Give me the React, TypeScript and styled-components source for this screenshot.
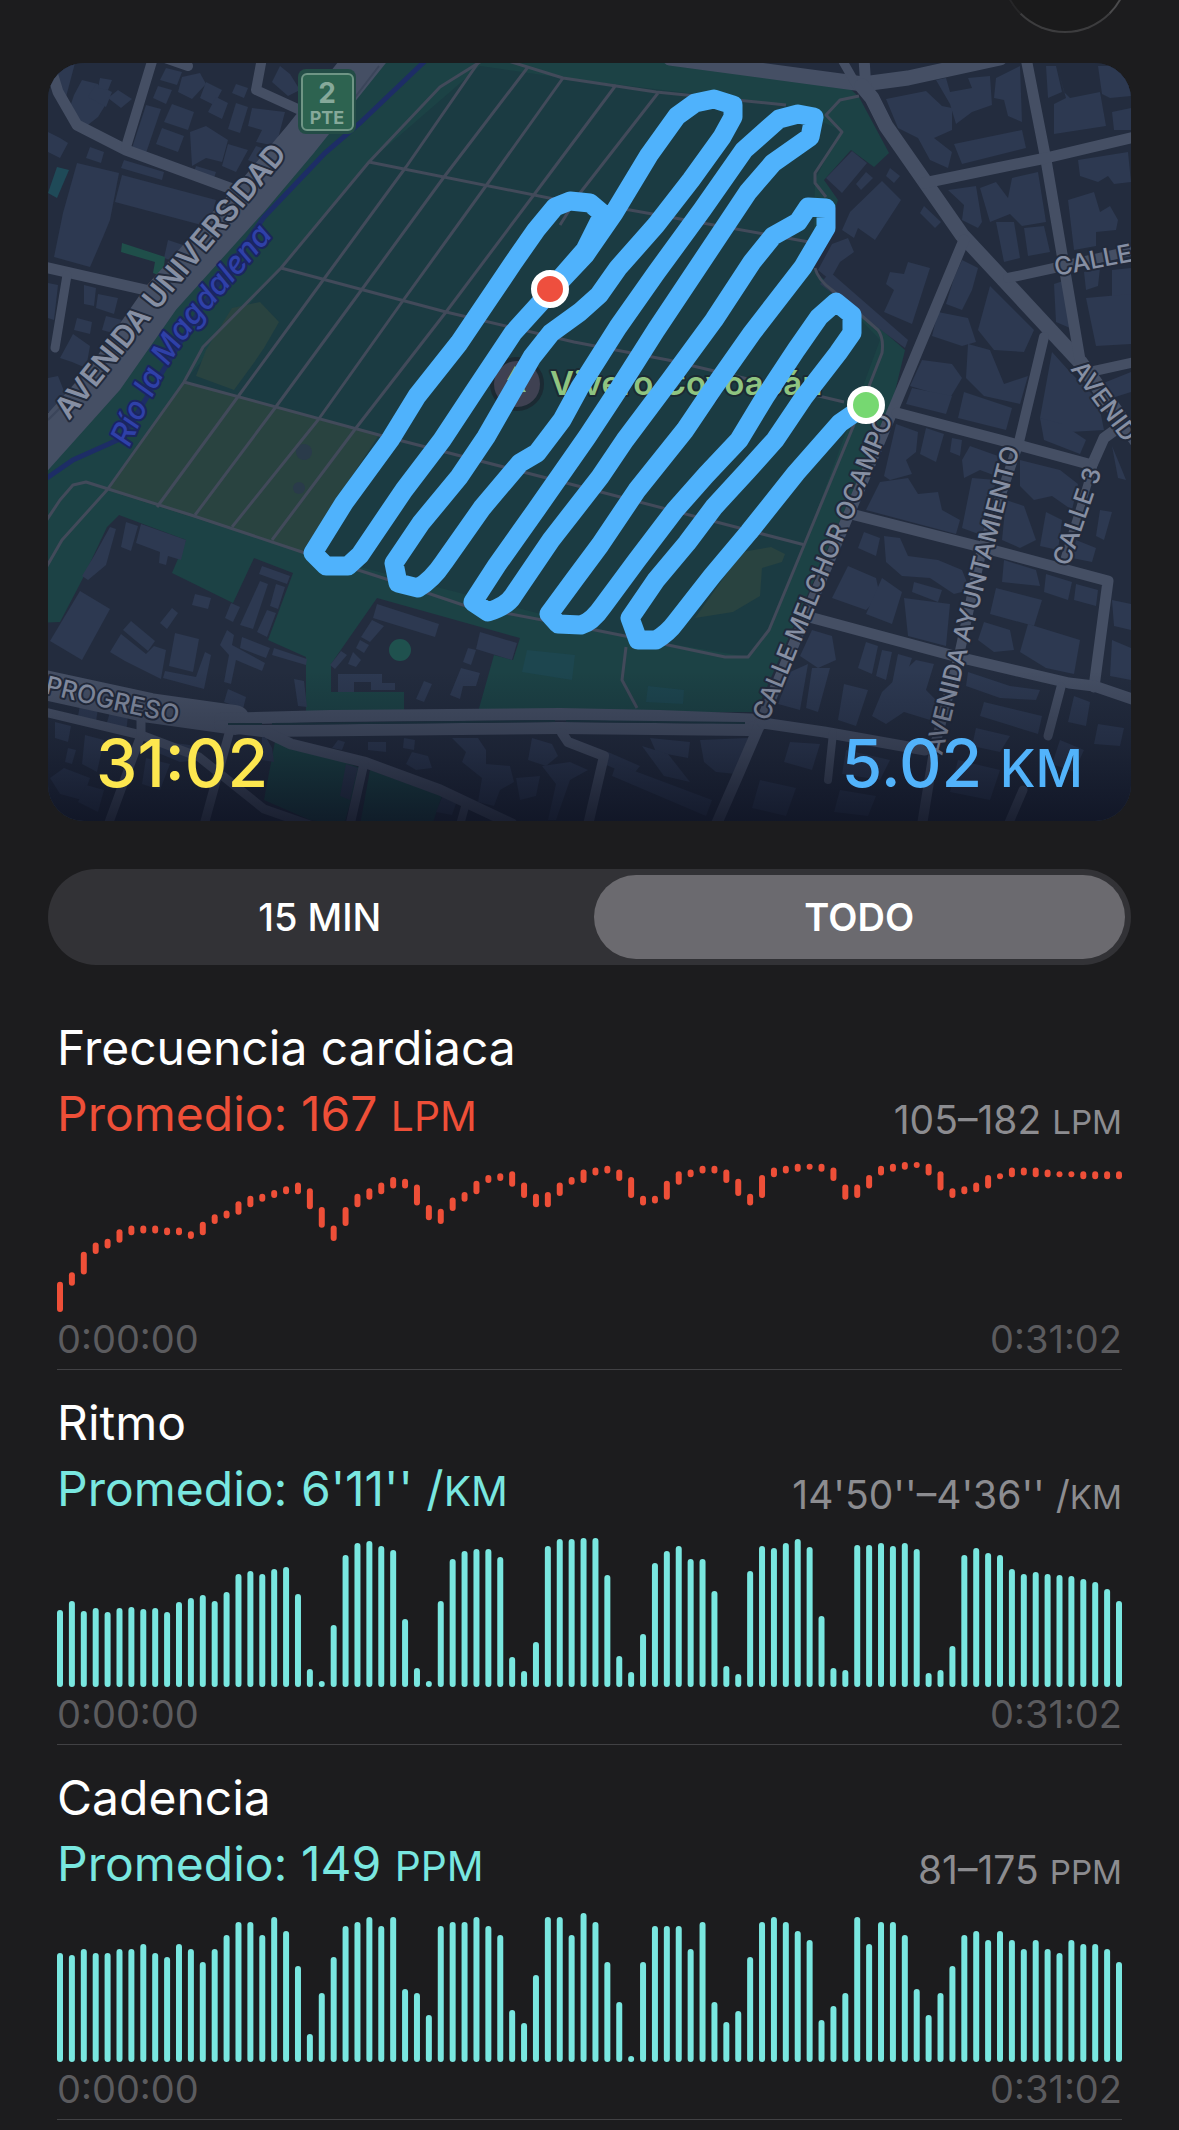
import React, { useState } from "react";
import styled, { createGlobalStyle } from "styled-components";

const GlobalStyle = createGlobalStyle`
  *, *::before, *::after {
    box-sizing: border-box;
  }

  body {
    margin: 0;
    background: #1c1c1e;
    color: #ffffff;
    font-family: Inter, "Liberation Sans", sans-serif;
  }
`;

const Page = styled.main`
  display: flex;
  flex-direction: column;
  min-height: 100vh;
`;

const Header = styled.header`
  display: flex;
  justify-content: flex-end;
  align-items: flex-end;
  height: 33px;
  padding: 0 50px;
  overflow: hidden;
`;

const CloseButton = styled.button`
  flex: none;
  width: 128px;
  height: 128px;
  padding: 0;
  border: 2px solid #262628;
  border-right-color: #4a4a4c;
  border-bottom-color: #3c3c3e;
  border-radius: 50%;
  background: #1a1a1b;
`;

const MapCard = styled.section`
  position: relative;
  margin: 30px 48px 0;
  border-radius: 36px;
  overflow: hidden;
  background: #242d3f;
`;

const MapSvg = styled.svg`
  display: block;
  width: 100%;
  height: auto;
`;

const MapStats = styled.div`
  position: absolute;
  left: 48px;
  right: 48px;
  bottom: 12px;
  display: flex;
  justify-content: space-between;
  align-items: baseline;
  font-size: 66px;
  font-weight: 500;
  line-height: 80px;
`;

const Stat = styled.span<{ $color: string }>`
  color: ${({ $color }) => $color};
`;

const StatUnit = styled.span`
  font-size: 52px;
`;

const Segmented = styled.div`
  display: flex;
  gap: 8px;
  margin: 48px 48px 30px;
  padding: 6px;
  border-radius: 48px;
  background: #323236;
`;

const Segment = styled.button<{ $active: boolean }>`
  flex: 1;
  height: 84px;
  padding: 0;
  border: 0;
  border-radius: 42px;
  background: ${({ $active }) => ($active ? "#6b6a6f" : "transparent")};
  color: #ffffff;
  font-family: inherit;
  font-size: 38px;
  font-weight: ${({ $active }) => ($active ? 600 : 500)};
  cursor: pointer;
`;

const Metric = styled.section`
  margin: 0 57px;
  padding: 20px 0 3px;
  border-bottom: 1px solid #414144;
`;

const MetricTitle = styled.h2`
  margin: 0;
  font-size: 48px;
  font-weight: 400;
  line-height: 66px;
`;

const MetricSummary = styled.div`
  display: flex;
  justify-content: space-between;
  align-items: flex-end;
  height: 66px;
  margin-bottom: 15px;
`;

const Average = styled.span<{ $color: string }>`
  color: ${({ $color }) => $color};
  font-size: 48px;
  line-height: 66px;
`;

const Range = styled.span`
  color: #8c8c90;
  font-size: 39px;
  line-height: 54px;
`;

const Unit = styled.span`
  font-size: 0.85em;
  line-height: 1;
`;

const ChartSvg = styled.svg`
  display: block;
  width: 100%;
  height: auto;
`;

const TimeAxis = styled.div`
  display: flex;
  justify-content: space-between;
  color: #5b5b5e;
  font-size: 38px;
  line-height: 54px;
`;

/* ---------- chart data ---------- */

type Span = [number, number];

// [max, min] beats per minute for each slice of the workout
const heartRate: Span[] = [
  [118, 105], [123, 119], [134, 125], [139, 136], [141, 139], [146, 142], [148, 146], [148, 147], [148, 147], [147, 146],
  [147, 146], [145, 144], [150, 146], [154, 152], [156, 155], [161, 157], [164, 161], [165, 164], [167, 166], [169, 168],
  [171, 168], [168, 160], [158, 150], [148, 143], [158, 151], [165, 161], [168, 165], [171, 168], [174, 171], [173, 171],
  [170, 162], [159, 154], [157, 152], [163, 159], [166, 164], [172, 168], [175, 174], [176, 175], [177, 172], [171, 166],
  [165, 161], [166, 161], [171, 167], [174, 173], [178, 174], [179, 178], [180, 179], [178, 175], [174, 166], [164, 162],
  [164, 163], [172, 165], [177, 173], [178, 177], [180, 179], [180, 179], [178, 174], [173, 167], [165, 162], [175, 166],
  [179, 177], [180, 179], [181, 180], [181, 181], [181, 180], [179, 175], [170, 165], [170, 166], [175, 171], [180, 178],
  [181, 180], [182, 181], [182, 182], [181, 178], [177, 170], [168, 166], [169, 168], [171, 169], [175, 171], [176, 176],
  [179, 177], [179, 178], [179, 177], [178, 177], [177, 177], [177, 177], [177, 176], [177, 176], [177, 176], [177, 176],
];

const pace = [
  77, 86, 76, 79, 75, 79, 80, 78, 79, 75, 85, 89, 92, 86, 95, 113, 116, 113, 118, 120, 93, 18, 6, 62, 132, 144, 146, 141, 137, 68,
  19, 6, 86, 128, 136, 138, 138, 130, 30, 16, 45, 141, 148, 148, 149, 149, 112, 31, 15, 53, 124, 136, 141, 128, 128, 96, 21, 13, 116, 141,
  139, 144, 148, 140, 71, 19, 17, 142, 142, 144, 141, 144, 138, 14, 17, 41, 132, 139, 134, 132, 118, 113, 115, 113, 112, 111, 108, 105, 98, 86,
];

const cadence = [
  109, 107, 113, 109, 109, 113, 113, 118, 109, 105, 118, 113, 100, 113, 127, 140, 140, 127, 145, 131, 96, 28, 69, 105, 136, 140, 145, 136, 145, 73,
  69, 47, 136, 140, 140, 145, 136, 127, 52, 39, 87, 145, 145, 127, 149, 140, 100, 60, 6, 100, 136, 136, 136, 113, 140, 60, 40, 51, 105, 140,
  145, 140, 131, 122, 42, 56, 69, 145, 118, 140, 140, 127, 73, 47, 69, 96, 127, 131, 122, 131, 122, 113, 122, 113, 109, 122, 118, 118, 113, 100,
];

const CHART_W = 1065;
const CHART_H = 150;
const BAR_W = 6;

const heartSpans: Span[] = heartRate.map(([hi, lo]) => {
  const scale = (CHART_H - BAR_W) / (182 - 105);
  return [(182 - hi) * scale, (182 - lo) * scale + BAR_W];
});

const fromHeights = (values: number[]): Span[] => values.map((v) => [CHART_H - v, CHART_H]);

const BarChart: React.FC<{ spans: Span[]; color: string; label: string }> = ({ spans, color, label }) => {
  const step = (CHART_W - BAR_W) / (spans.length - 1);
  return (
    <ChartSvg viewBox={`0 0 ${CHART_W} ${CHART_H}`} role="img" aria-label={label}>
      {spans.map(([top, bottom], i) => (
        <rect key={i} x={i * step} y={top} width={BAR_W} height={bottom - top} rx={BAR_W / 2} fill={color} />
      ))}
    </ChartSvg>
  );
};

/* ---------- map drawing ---------- */

// [width, path]
const roads: [number, string][] = [
  [11, "M50 66 L58 92 L77 125 L126 150 L235 190"],
  [10, "M153 58 L126 147"],
  [10, "M262 58 L256 90 L300 110"],
  [11, "M44 267 L150 291"],
  [9, "M67 275 L55 348"],
  [10, "M165 58 L188 66"],
  [38, "M372 50 L300 140 L251 198 L161 298 L105 378 L30 462"],
  [15, "M670 58 L863 84 L908 78 L1000 58"],
  [11, "M864 58 L866 90"],
  [9, "M841 58 L857 86"],
  [15, "M862 86 L872 98 L886 126 L962 235 L1080 362 L1140 445"],
  [11, "M1026 58 L1046 160 L1080 360"],
  [11, "M924 183 L1046 158 L1135 137"],
  [10, "M1008 278 L1054 268 L1135 250"],
  [10, "M1085 373 L1135 362"],
  [11, "M964 240 L893 410 L760 724"],
  [10, "M1044 337 L1019 442 L981 553 L958 660 L935 745 L922 825"],
  [11, "M897 413 L1000 440 L1092 465 L1104 438 L1122 425"],
  [8, "M1094 463 L1062 567"],
  [11, "M855 515 L981 547 L1108 581 L1094 687"],
  [11, "M813 618 L958 657 L1069 683 L1094 686 L1135 700"],
  [9, "M1061 687 L1048 736"],
  [9, "M1023 790 L1008 825"],
  [30, "M40 684 L150 708 L235 720"],
  [12, "M220 719 L330 716 L560 714 L660 716 L765 720"],
  [12, "M220 726 L262 731 L560 728 L748 730 L765 722"],
  [9, "M40 711 L141 735 L199 757 L264 809 L310 825"],
  [9, "M141 712 L141 735 L108 825"],
  [9, "M230 730 L204 825"],
  [11, "M268 733 L291 744 L364 762 L440 790 L512 824"],
  [9, "M364 763 L350 825"],
  [8, "M466 803 L460 825"],
  [10, "M562 733 L568 742 L604 756 L588 825"],
  [11, "M760 724 L738 775 L716 825"],
  [11, "M763 723 L824 732 L925 750"],
  [8, "M833 733 L828 780"],
];

const parkPaths = [
  "M369 162 L574 203 L630 210 L809 242",
  "M281 268 L446 312 L574 342 L668 360 L844 402",
  "M184 382 L379 435 L574 485 L805 545",
  "M40 530 L60 500 L73 485 L86 482 L191 515 L302 552 L383 578 L463 605 L595 630 L630 637 L725 657 L748 657 L769 630 L805 543 L853 427 L882 353 Q884 338 878 330 L832 290 Q818 280 815 268",
  "M40 578 L62 540 L107 490 L184 382 L203 347 L281 268 L369 162 L440 87 L480 62",
  "M157 507 L237 398 L321 283 L406 167 L478 63",
  "M195 515 L275 408 L360 292 L444 177 L528 67",
  "M232 527 L318 420 L402 302 L488 183 L563 78",
  "M272 540 L356 428 L446 312 L536 192 L616 85",
  "M560 225 L580 193 L658 93",
  "M505 60 L563 78 L656 92 L786 105",
  "M859 96 L840 100 L826 115 L842 132 L815 173 L815 183 L826 197",
  "M626 647 L622 680 L637 708",
];

const olivePatches = [
  "M184 382 L379 435 L302 552 L107 490 Z",
  "M232 308 L260 302 L279 322 L264 348 L253 364 L234 390 L196 376 L206 350 Z",
  "M742 552 L771 547 L785 554 L782 562 L762 568 L760 596 L733 612 L695 618 Z",
];

const schoolGrounds = [
  "M119 515 L186 540 L172 573 L233 603 L254 558 L293 573 L268 640 L306 657 L306 712 L235 716 L40 676 L40 623 L60 622 L82 580 L107 527 Z",
  "M377 598 L520 638 L513 660 L494 655 L478 712 L404 712 L404 692 L331 692 L331 664 Z",
];

const buildings = [
  // west of the avenue
  "M77 163 L119 173 L110 220 L103 237 L90 267 L54 257 L63 213 Z",
  "M122 175 L216 200 L209 227 L115 202 Z",
  "M48 63 L75 63 L66 97 L54 80 Z",
  "M74 95 L82 80 L98 84 L106 104 L98 117 L84 128 L69 110 Z",
  "M88 97 L96 84 L112 92 L106 107 Z",
  "M100 78 L112 80 L108 90 L98 88 Z",
  "M118 90 L132 99 L121 108 L108 98 Z",
  "M48 132 L60 138 L68 143 L60 158 L48 152 Z",
  "M90 147 L104 152 L101 163 L86 158 Z",
  "M124 160 L164 172 L162 180 L121 168 Z",
  "M146 105 L161 109 L146 153 L132 148 Z",
  "M166 68 L182 72 L177 85 L160 80 Z",
  "M158 86 L172 90 L166 104 L153 98 Z",
  "M182 77 L200 73 L206 84 L192 99 L178 92 Z",
  "M172 104 L194 112 L188 130 L164 122 Z",
  "M206 82 L222 90 L214 105 L200 98 Z",
  "M216 97 L228 103 L222 119 L208 112 Z",
  "M236 103 L248 107 L240 133 L228 129 Z",
  "M162 128 L184 136 L178 152 L156 144 Z",
  "M190 132 L206 126 L228 140 L222 162 L206 158 L192 166 Z",
  "M236 84 L248 88 L244 98 L232 93 Z",
  "M252 108 L285 112 L276 146 L256 142 L262 130 L248 126 Z",
  "M228 144 L248 150 L236 172 L222 166 Z",
  "M196 166 L216 172 L212 184 L192 178 Z",
  "M256 146 L268 150 L258 165 L248 160 Z",
  "M280 66 L290 74 L300 90 L288 96 L272 82 Z",
  "M84 285 L96 288 L94 306 L84 304 Z",
  "M98 294 L118 298 L114 314 L96 308 Z",
  "M77 318 L92 322 L90 334 L74 330 Z",
  "M106 316 L122 320 L116 334 L102 330 Z",
  "M73 334 L90 346 L86 368 L72 362 L60 358 Z",
  "M48 378 L58 376 L66 396 L52 412 L48 412 Z",
  "M168 240 L186 246 L176 262 L164 258 Z",
  "M48 283 L58 285 L54 320 L48 318 Z",
  // schools south of the park
  "M110 527 L116 529 L106 565 L88 580 L82 576 L94 556 Z",
  "M126 522 L138 526 L131 551 L121 547 Z",
  "M141 524 L186 540 L181 560 L168 556 L166 565 L159 563 L160 552 L136 543 Z",
  "M80 591 L110 609 L82 660 L50 641 Z",
  "M195 594 L211 598 L208 609 L192 605 Z",
  "M172 608 L178 613 L167 629 L160 623 Z",
  "M131 621 L155 641 L148 651 L123 630 Z",
  "M121 634 L146 654 L154 646 L166 650 L161 679 L125 661 L110 652 Z",
  "M175 633 L199 639 L193 672 L169 666 Z",
  "M205 652 L211 655 L204 689 L163 678 L165 671 L196 677 Z",
  "M262 566 L290 576 L287 584 L259 574 Z",
  "M260 581 L268 584 L253 629 L240 625 Z",
  "M276 584 L285 587 L278 609 L270 606 Z",
  "M267 610 L276 613 L267 637 L257 632 Z",
  "M231 603 L240 607 L233 622 L225 618 Z",
  "M242 637 L270 648 L266 658 L240 648 Z",
  "M227 630 L234 635 L232 645 L265 663 L262 671 L236 660 L231 684 L224 682 L229 655 L220 645 Z",
  "M274 648 L307 659 L306 665 L272 655 Z",
  "M228 689 L246 697 L243 709 L224 702 Z",
  "M294 679 L304 681 L307 707 L298 706 Z",
  "M377 604 L439 624 L435 637 L373 618 Z",
  "M372 620 L384 626 L370 642 L361 637 Z",
  "M360 640 L369 645 L364 653 L356 648 Z",
  "M341 651 L347 655 L335 669 L330 665 Z",
  "M353 652 L361 660 L356 667 L348 664 Z",
  "M338 674 L382 674 L382 683 L395 683 L395 690 L371 690 L371 682 L354 682 L354 692 L338 692 Z",
  "M480 632 L517 643 L512 660 L476 649 Z",
  "M468 648 L476 650 L471 665 L463 662 Z",
  "M461 668 L480 673 L476 686 L463 686 L460 699 L450 695 Z",
  "M424 681 L432 684 L424 702 L416 699 Z",
  // south of Progreso
  "M80 705 L98 708 L96 722 L78 716 Z",
  "M110 712 L128 715 L126 734 L106 726 Z",
  "M55 722 L71 726 L68 742 L55 738 Z",
  "M68 748 L76 750 L72 764 L65 762 Z",
  "M85 735 L104 740 L97 772 L82 764 Z",
  "M64 768 L90 778 L82 800 L60 794 L50 778 Z",
  "M86 785 L104 790 L98 812 L78 802 Z",
  "M146 758 L170 764 L160 790 L142 784 Z",
  "M150 740 L190 745 L200 760 L180 762 L146 748 Z",
  "M262 730 L272 748 L274 762 L262 760 Z",
  "M338 740 L345 742 L342 750 L332 748 Z",
  "M368 742 L386 742 L386 752 L368 750 Z",
  "M404 738 L415 740 L414 750 L403 748 Z",
  "M452 738 L478 738 L486 750 L486 764 L510 766 L514 782 L500 790 L494 806 L478 802 L482 778 L462 762 L466 752 Z",
  "M412 752 L428 756 L432 768 L416 770 L406 764 Z",
  "M532 738 L552 744 L558 756 L546 766 L528 760 Z",
  "M516 778 L540 776 L536 796 L520 800 Z",
  "M542 766 L570 762 L588 770 L570 780 L556 820 L548 820 L556 784 Z",
  "M346 764 L358 768 L350 800 L340 796 Z",
  "M445 790 L458 798 L452 815 L436 812 Z",
  "M608 752 L640 766 L632 776 L604 764 Z",
  "M650 738 L690 742 L688 758 L656 752 Z",
  "M700 740 L748 738 L736 774 L716 772 L704 762 Z",
  "M616 764 L712 800 L706 816 L612 776 Z",
  "M642 746 L668 754 L690 782 L664 776 Z",
  // north-east
  "M886 99 L926 91 L942 106 L952 108 L952 130 L934 138 L952 152 L948 168 L930 160 L918 138 L898 128 Z",
  "M936 80 L946 78 L950 92 L972 88 L968 78 L990 76 L992 105 L972 112 L956 124 L950 104 Z",
  "M996 78 L1020 66 L1022 122 L1008 116 L1004 100 L994 98 Z",
  "M954 144 L1022 130 L1026 148 L962 164 Z",
  "M1046 66 L1056 66 L1062 92 L1048 98 Z",
  "M1058 70 L1064 92 L1070 98 L1100 92 L1106 126 L1054 134 L1054 104 L1066 98 Z",
  "M1098 66 L1131 66 L1131 96 L1110 98 L1102 94 Z",
  "M1112 112 L1131 108 L1131 130 L1114 130 Z",
  "M1078 160 L1128 152 L1131 182 L1114 184 L1108 176 L1098 182 L1080 176 Z",
  "M1068 200 L1094 192 L1100 212 L1110 206 L1118 220 L1116 230 L1096 232 L1096 246 L1074 250 Z",
  "M948 190 L976 186 L982 222 L978 228 L962 220 L964 205 Z",
  "M980 188 L996 182 L1008 198 L1012 178 L1038 172 L1046 222 L1022 226 L1010 214 L990 222 Z",
  "M996 222 L1014 222 L1020 258 L1004 262 Z",
  "M1024 228 L1044 226 L1050 252 L1028 256 Z",
  "M852 151 L867 163 L842 193 L826 178 Z",
  "M866 172 L873 178 L861 190 L856 184 Z",
  "M890 168 L900 176 L894 183 L886 176 Z",
  "M882 181 L901 200 L875 240 L858 228 L854 238 L842 230 L850 212 Z",
  "M924 206 L941 222 L935 228 L920 213 Z",
  "M848 238 L854 252 L840 262 L830 280 L818 270 L832 244 Z",
  "M830 272 L908 340 L905 348 L820 284 Z",
  "M908 262 L930 268 L912 324 L884 312 L894 290 L886 284 L890 272 L904 274 Z",
  "M962 260 L978 268 L972 290 L962 310 L946 304 L954 278 Z",
  "M990 286 L1034 330 L1024 352 L994 350 L978 330 Z",
  "M938 312 L968 318 L976 342 L962 346 L932 336 Z",
  "M922 360 L952 364 L962 378 L950 398 L910 386 Z",
  "M968 344 L990 350 L1004 384 L1028 376 L1020 404 L984 396 L966 378 Z",
  "M912 388 L952 396 L946 414 L906 404 Z",
  "M964 392 L1012 408 L1006 430 L958 418 Z",
  "M1054 284 L1066 280 L1070 328 L1056 322 Z",
  "M1084 272 L1100 268 L1098 286 L1086 290 Z",
  "M1112 270 L1131 268 L1131 300 L1112 296 Z",
  "M1086 298 L1131 294 L1131 344 L1096 346 Z",
  "M1052 352 L1070 372 L1098 400 L1104 430 L1070 432 L1040 418 Z",
  "M1096 386 L1131 372 L1131 392 L1112 398 Z",
  // east blocks
  "M896 424 L918 432 L916 452 L906 460 L912 474 L890 480 L884 476 Z",
  "M926 428 L944 434 L936 462 L920 454 Z",
  "M952 438 L962 440 L960 456 L950 452 Z",
  "M970 446 L998 456 L996 476 L980 470 L964 478 L962 460 Z",
  "M880 482 L908 478 L918 494 L938 492 L942 510 L960 520 L956 534 L866 510 Z",
  "M972 478 L996 480 L984 536 L962 528 Z",
  "M1020 460 L1060 470 L1078 484 L1072 510 L1052 496 L1034 500 L1020 486 Z",
  "M1006 500 L1024 506 L1036 540 L1020 548 L1002 540 Z",
  "M1046 512 L1062 520 L1058 550 L1040 546 Z",
  "M1040 418 L1062 424 L1086 440 L1080 454 L1044 440 Z",
  "M1112 446 L1122 470 L1126 480 L1118 478 Z",
  "M1076 540 L1096 548 L1092 562 L1072 558 Z",
  "M1100 510 L1112 512 L1104 540 L1096 536 Z",
  "M864 532 L880 538 L876 556 L858 548 Z",
  "M884 536 L900 538 L908 556 L938 560 L962 570 L970 590 L954 594 L930 578 L902 576 L886 562 Z",
  "M848 566 L876 578 L880 596 L866 610 L832 598 Z",
  "M882 578 L902 592 L892 624 L866 614 Z",
  "M904 598 L950 604 L946 646 L908 636 Z",
  "M914 582 L942 590 L938 602 L912 592 Z",
  "M1004 560 L1036 570 L1040 586 L1002 582 Z",
  "M996 588 L1042 600 L1034 626 L990 614 Z",
  "M1046 574 L1072 582 L1068 600 L1044 592 Z",
  "M1076 584 L1098 590 L1096 606 L1074 600 Z",
  "M984 622 L1010 630 L1014 650 L994 652 L978 640 Z",
  "M1028 624 L1080 640 L1074 674 L1046 668 L1020 652 Z",
  "M1112 600 L1131 604 L1131 630 L1114 626 Z",
  "M1112 640 L1131 648 L1131 680 L1110 676 Z",
  "M812 630 L832 636 L836 660 L818 668 L800 656 Z",
  "M830 668 L818 712 L806 708 L812 668 Z",
  "M790 672 L808 664 L800 710 L778 704 Z",
  "M866 642 L878 646 L872 674 L858 668 Z",
  "M882 650 L892 652 L886 680 L876 676 Z",
  "M898 654 L912 658 L902 688 L892 684 Z",
  "M916 660 L934 664 L926 690 L940 704 L930 720 L904 712 L886 724 L872 716 L882 692 Z",
  "M844 684 L868 690 L856 726 L838 720 Z",
  "M968 672 L1010 686 L1040 690 L1036 700 L1000 698 L966 686 Z",
  "M984 702 L1042 716 L1038 734 L980 716 Z",
  "M976 728 L1010 736 L1000 752 L972 746 Z",
  "M1074 696 L1090 702 L1086 726 L1068 722 Z",
  "M1098 724 L1124 728 L1120 746 L1094 744 Z",
  "M958 760 L1000 770 L990 800 L950 792 Z",
  "M790 742 L820 744 L812 770 L784 762 Z",
  "M846 750 L890 760 L880 780 L842 774 Z",
  "M760 780 L796 788 L786 816 L752 808 Z",
  "M840 790 L876 796 L868 816 L834 812 Z",
  "M1060 740 L1084 750 L1074 772 L1052 764 Z",
];

const routePath =
  "M866 405 L840 423 L796 473 L749 532 L712 576 L676 622 Q668 633 656 640 L638 640 L630 618 " +
  "L656 580 L687 543 L714 507 L748 470 L775 440 L804 397 L838 353 L852 333 L852 315 L836 302 L819 317 L796 350 L765 397 L739 440 " +
  "L706 475 L675 510 L637 560 L603 606 Q592 622 581 625 L558 624 L549 614 " +
  "L574 580 L600 545 L637 490 L685 430 L714 387 L752 333 L803 267 L826 228 L826 208 L808 207 L798 222 L773 236 L752 262 L714 320 L670 380 L625 440 " +
  "L600 477 L551 540 L513 596 Q507 606 488 612 L473 602 " +
  "L497 565 L536 510 L587 437 L618 390 L656 330 L714 243 L748 192 L773 163 L810 137 L814 117 L798 114 L779 119 L744 150 L702 210 L656 273 L618 327 L580 387 L562 420 " +
  "L537 453 L520 463 L482 508 L444 562 Q432 580 418 588 L398 583 L394 563 " +
  "L421 523 L459 477 L486 437 L532 357 L551 333 L580 312 L599 295 L618 268 L656 225 L691 180 L722 137 L733 117 L733 105 L714 99 L695 103 L677 116 L649 155 L614 213 L585 255 L551 291 " +
  "L513 333 L477 387 L442 440 L404 490 L360 555 L348 566 L326 566 L313 553 " +
  "L344 503 L390 440 L417 396 L459 343 L486 303 L513 263 L536 230 L555 207 L570 201 L590 203 L603 214 L585 250 L551 289";

const MapLabel = styled.text<{ $size: number; $weight?: number }>`
  fill: #868fa3;
  stroke: #222a3b;
  stroke-width: 4px;
  stroke-linejoin: round;
  paint-order: stroke;
  font-size: ${({ $size }) => $size}px;
  font-weight: ${({ $weight = 500 }) => $weight};
`;

const RiverLabel = styled(MapLabel)`
  fill: #2f40a8;
  stroke: #1a2562;
  font-style: italic;
`;

const PlaceLabel = styled(MapLabel)`
  fill: #8fc480;
  stroke: #1b2a33;
`;

const ShieldText = styled.text<{ $size: number }>`
  fill: #86a99a;
  font-size: ${({ $size }) => $size}px;
  font-weight: 700;
  text-anchor: middle;
`;

const RouteMap: React.FC = () => (
  <MapSvg viewBox="48 63 1083 758" role="img" aria-label="Mapa del recorrido">
    <defs>
      <linearGradient id="map-fade" x1="0" y1="0" x2="0" y2="1">
        <stop offset="0" stopColor="#0c1020" stopOpacity={0} />
        <stop offset="0.5" stopColor="#0c1020" stopOpacity={0.3} />
        <stop offset="1" stopColor="#0c1020" stopOpacity={0.75} />
      </linearGradient>
      <path id="label-universidad" d="M69 421 L167 299 L330 104" />
      <path id="label-river" d="M129 448 C156 389 168 357 208 311 C242 271 260 253 292 211" />
      <path id="label-ocampo" d="M768 722 L910 378" />
      <path id="label-ayuntamiento" d="M942 756 L964 665 L1032 400" />
      <path id="label-calle3" d="M1069 567 L1109 450" />
      <path id="label-avenida" d="M1070 369 L1150 478" />
      <path id="label-calle" d="M1056 276 L1160 256" />
      <path id="label-progreso" d="M44 693 L110 709 L220 733" />
    </defs>

    <rect x="48" y="63" width="1083" height="758" fill="#232c3e" />

    {/* parkland */}
    <path
      d="M388 55 L670 55 L843 82 L859 97 L889 153 L874 167 L851 150 L824 180 L838 200 L813 270 L905 350 L893 400 L756 712 L230 716 L40 680 L40 450 L110 380 L161 312 L251 212 Z"
      fill="#1c4245"
    />
    <path
      d="M480 66 L563 78 L786 105 L840 130 L815 180 L813 270 L880 340 L805 543 L769 630 L748 657 L630 637 L302 552 L107 490 L184 382 L369 162 Z"
      fill="#1b3b42"
    />
    <path d="M276 736 L360 768 L344 825 L310 820 L264 800 Z" fill="#1b4345" />
    <path d="M370 770 L442 796 L432 825 L360 825 Z" fill="#1b4345" />
    {olivePatches.map((d) => (
      <path key={d} d={d} fill="#294340" />
    ))}
    <circle cx="304" cy="452" r="8" fill="#2a3b4a" />
    <circle cx="299" cy="488" r="6" fill="#2a3b4a" />
    <path d="M527 650 L575 655 L572 680 L522 672 Z" fill="#1d464f" />
    <path d="M648 686 L684 690 L683 704 L646 702 Z" fill="#1d464f" />
    {schoolGrounds.map((d) => (
      <path key={d} d={d} fill="#232c3e" />
    ))}
    <circle cx="400" cy="650" r="11" fill="#1f514e" />

    {buildings.map((d) => (
      <path key={d} d={d} fill="#2d3951" />
    ))}
    <path d="M57 167 L69 170 L57 198 L48 193 Z" fill="#1f4a58" />
    <path d="M122 243 L165 257 L163 277 L153 273 L155 262 L121 252 Z" fill="#1f4f4a" />

    {/* river and paths */}
    <path d="M426 60 L360 123 L325 153 L264 217 L200 310 L122 438 L73 460 L44 480" fill="none" stroke="#1d2d66" strokeWidth="5" />
    <g fill="none" stroke="#424a5a" strokeWidth="3" strokeLinejoin="round">
      {parkPaths.map((d) => (
        <path key={d} d={d} />
      ))}
    </g>

    <g fill="none" stroke="#454f64" strokeLinejoin="round" strokeLinecap="round">
      {roads.map(([w, d]) => (
        <path key={d} d={d} strokeWidth={w} />
      ))}
    </g>
    <path d="M228 724 L262 724 M272 724 L555 721 M566 721 L745 723" fill="none" stroke="#1c3440" strokeWidth="2" />
    <path d="M379 66 L330 130 M48 420 L70 398" fill="none" stroke="#3b455a" strokeWidth="2" />

    {/* road shield */}
    <rect x="298" y="69" width="58" height="65" rx="8" fill="#234c46" />
    <rect x="302" y="74" width="51" height="56" rx="5" fill="#2d6350" stroke="#6f9585" strokeWidth="2" />
    <ShieldText $size={28} x={327} y={103}>2</ShieldText>
    <ShieldText $size={18} x={327} y={124}>PTE</ShieldText>

    <MapLabel $size={30} $weight={600}>
      <textPath href="#label-universidad">AVENIDA UNIVERSIDAD</textPath>
    </MapLabel>
    <RiverLabel $size={31}>
      <textPath href="#label-river">Río la Magdalena</textPath>
    </RiverLabel>
    <MapLabel $size={25}>
      <textPath href="#label-ocampo">CALLE MELCHOR OCAMPO</textPath>
    </MapLabel>
    <MapLabel $size={25}>
      <textPath href="#label-ayuntamiento">AVENIDA AYUNTAMIENTO</textPath>
    </MapLabel>
    <MapLabel $size={25}>
      <textPath href="#label-calle3">CALLE 3</textPath>
    </MapLabel>
    <MapLabel $size={25}>
      <textPath href="#label-avenida">AVENID</textPath>
    </MapLabel>
    <MapLabel $size={25}>
      <textPath href="#label-calle">CALLE</textPath>
    </MapLabel>
    <MapLabel $size={25}>
      <textPath href="#label-progreso">PROGRESO</textPath>
    </MapLabel>

    {/* point of interest */}
    <circle cx="517" cy="384" r="25" fill="#3f4152" stroke="#1b2a33" strokeWidth="4" />
    <path d="M515 366 L524 380 L519 380 L526 392 L518 392 L518 400 L513 400 L513 392 L505 392 L511 380 L507 380 Z" fill="#8fc480" />
    <PlaceLabel $size={33} $weight={600} x={550} y={395}>Vivero Coyoacán</PlaceLabel>

    <rect x="48" y="671" width="1083" height="150" fill="url(#map-fade)" />

    <path d={routePath} fill="none" stroke="#4fb2fc" strokeWidth="19" strokeLinejoin="round" strokeLinecap="round" />
    <circle cx="866" cy="405" r="16" fill="#76d871" stroke="#ffffff" strokeWidth="6" />
    <circle cx="550" cy="289" r="16" fill="#ee4f3e" stroke="#ffffff" strokeWidth="6" />
  </MapSvg>
);

interface MetricCardProps {
  title: string;
  average: string;
  range: string;
  unit: string;
  color: string;
  spans: Span[];
}

const MetricCard: React.FC<MetricCardProps> = ({ title, average, range, unit, color, spans }) => (
  <Metric>
    <MetricTitle>{title}</MetricTitle>
    <MetricSummary>
      <Average $color={color}>
        Promedio: {average}
        <Unit>{unit}</Unit>
      </Average>
      <Range>
        {range}
        <Unit>{unit}</Unit>
      </Range>
    </MetricSummary>
    <BarChart spans={spans} color={color} label={title} />
    <TimeAxis>
      <span>0:00:00</span>
      <span>0:31:02</span>
    </TimeAxis>
  </Metric>
);

const periods = ["15 MIN", "TODO"];

const App: React.FC = () => {
  const [period, setPeriod] = useState("TODO");

  return (
    <>
      <GlobalStyle />
      <Page>
        <Header>
          <CloseButton type="button" aria-label="Cerrar" />
        </Header>

        <MapCard>
          <RouteMap />
          <MapStats>
            <Stat $color="#fde74f">31:02</Stat>
            <Stat $color="#52b3fb">
              5.02 <StatUnit>KM</StatUnit>
            </Stat>
          </MapStats>
        </MapCard>

        <Segmented role="group" aria-label="Periodo">
          {periods.map((p) => (
            <Segment key={p} type="button" $active={p === period} aria-pressed={p === period} onClick={() => setPeriod(p)}>
              {p}
            </Segment>
          ))}
        </Segmented>

        <MetricCard title="Frecuencia cardiaca" average="167 " range="105–182 " unit="LPM" color="#ee4f38" spans={heartSpans} />
        <MetricCard title="Ritmo" average="6'11'' /" range="14'50''–4'36'' /" unit="KM" color="#79e7e0" spans={fromHeights(pace)} />
        <MetricCard title="Cadencia" average="149 " range="81–175 " unit="PPM" color="#79e7e0" spans={fromHeights(cadence)} />
      </Page>
    </>
  );
};

export default App;
